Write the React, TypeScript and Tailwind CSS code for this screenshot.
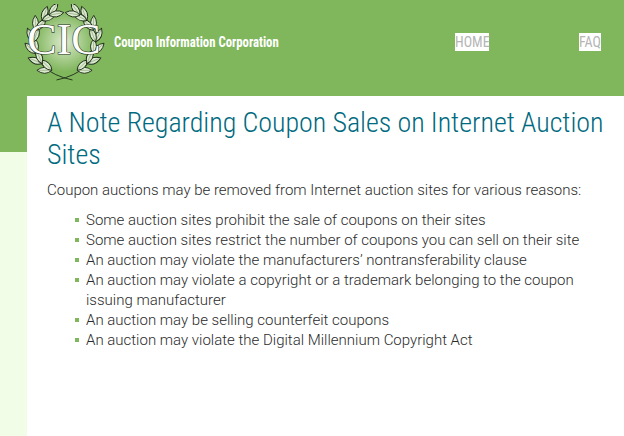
const items = [
  ["Some auction sites prohibit the sale of coupons on their sites"],
  ["Some auction sites restrict the number of coupons you can sell on their site"],
  ["An auction may violate the manufacturers’ nontransferability clause"],
  ["An auction may violate a copyright or a trademark belonging to the coupon", "issuing manufacturer"],
  ["An auction may be selling counterfeit coupons"],
  ["An auction may violate the Digital Millennium Copyright Act"],
];

const cx = 42.5;
const cy = 38;
const stemR = 31;

const angles = [24, 46, 68, 90, 112, 134, 150];

function Branch() {
  return (
    <g>
      <path
        d={`M${cx + 8} ${cy + 38} Q${cx - 30} ${cy + 30} ${cx - stemR} ${cy} Q${cx - 30} ${cy - 18} ${cx - 18} ${cy - 26}`}
        fill="none"
        stroke="#1d2b17"
        strokeWidth="0.9"
      />
      {angles.map((deg) => {
        const t = (deg * Math.PI) / 180;
        const x = cx - stemR * Math.sin(t);
        const y = cy + stemR * Math.cos(t);
        const dir = (Math.atan2(-Math.sin(t), -Math.cos(t)) * 180) / Math.PI;
        return [dir - 24, dir + 20].map((r) => (
          <g key={r} transform={`translate(${x} ${y}) rotate(${r})`}>
            <path d="M0 0 Q7 -6 15 0 Q7 6 0 0 Z" fill="#dbeacf" stroke="#1d2b17" strokeWidth="0.9" />
            <path d="M1 0 L13 0" stroke="#5c7a4c" strokeWidth="0.4" />
          </g>
        ));
      })}
    </g>
  );
}

function Logo() {
  return (
    <svg width="84" height="78" viewBox="0 0 84 78" className="shrink-0">
      <defs>
        <radialGradient id="glow" cx="50%" cy="50%" r="50%">
          <stop offset="0%" stopColor="#dcebcf" />
          <stop offset="100%" stopColor="#80b65c" />
        </radialGradient>
      </defs>
      <circle cx={cx} cy={cy} r="30" fill="url(#glow)" />
      <Branch />
      <g transform={`translate(${cx * 2} 0) scale(-1 1)`}>
        <Branch />
      </g>
      <text
        x={cx - 0.5}
        y="50"
        textAnchor="middle"
        fontFamily="'Liberation Serif', serif"
        fontSize="44"
        fill="#fff"
        stroke="#26331f"
        strokeWidth="1.2"
        paintOrder="stroke"
      >
        CIC
      </text>
    </svg>
  );
}

export default function App() {
  return (
    <div className="relative min-h-[436px] bg-[#f1fde6] font-['Roboto',sans-serif]">
      <div className="absolute inset-x-0 top-0 h-[152px] bg-[#80b65c]" />
      <div className="relative flex flex-col">
        <header className="flex h-[96px] items-start pl-[22px] pt-[4px]">
          <Logo />
          <div className="mt-[26px] ml-[8px] w-[166px] whitespace-nowrap">
            <span className="inline-block origin-left scale-x-[0.88] text-[14.5px] leading-[16px] font-bold text-white [font-stretch:75%]">
              Coupon Information Corporation
            </span>
          </div>
          <nav className="ml-auto mt-[29px] flex pr-[23px] text-[14px] leading-[18px] whitespace-nowrap text-[#b5b5b5] [font-stretch:75%]">
            <a className="w-[34px] bg-white">HOME</a>
            <a className="ml-[90px] w-[22px] bg-white">FAQ</a>
          </nav>
        </header>
        <main className="ml-[27px] min-h-[340px] bg-white pl-[20px] pt-[11px]">
          <h1 className="text-[28px] leading-[32px] font-light tracking-[-0.04px] text-[#006a80] [font-stretch:75%]">
            A Note Regarding Coupon Sales on Internet Auction Sites
          </h1>
          <p className="mt-[9px] text-[15px] leading-[20px] font-light text-[#2b2b2b]">
            Coupon auctions may be removed from Internet auction sites for various reasons:
          </p>
          <ul className="mt-[10px] pl-[28px] pr-[10px] text-[15px] leading-[20px] font-light text-[#2b2b2b]">
            {items.map((lines) => (
              <li key={lines[0]} className="relative pl-[11px]">
                <span className="absolute left-0 top-[8px] size-[4px] bg-[#80b65c]" />
                {lines.map((l) => (
                  <div key={l}>{l}</div>
                ))}
              </li>
            ))}
          </ul>
        </main>
      </div>
    </div>
  );
}
